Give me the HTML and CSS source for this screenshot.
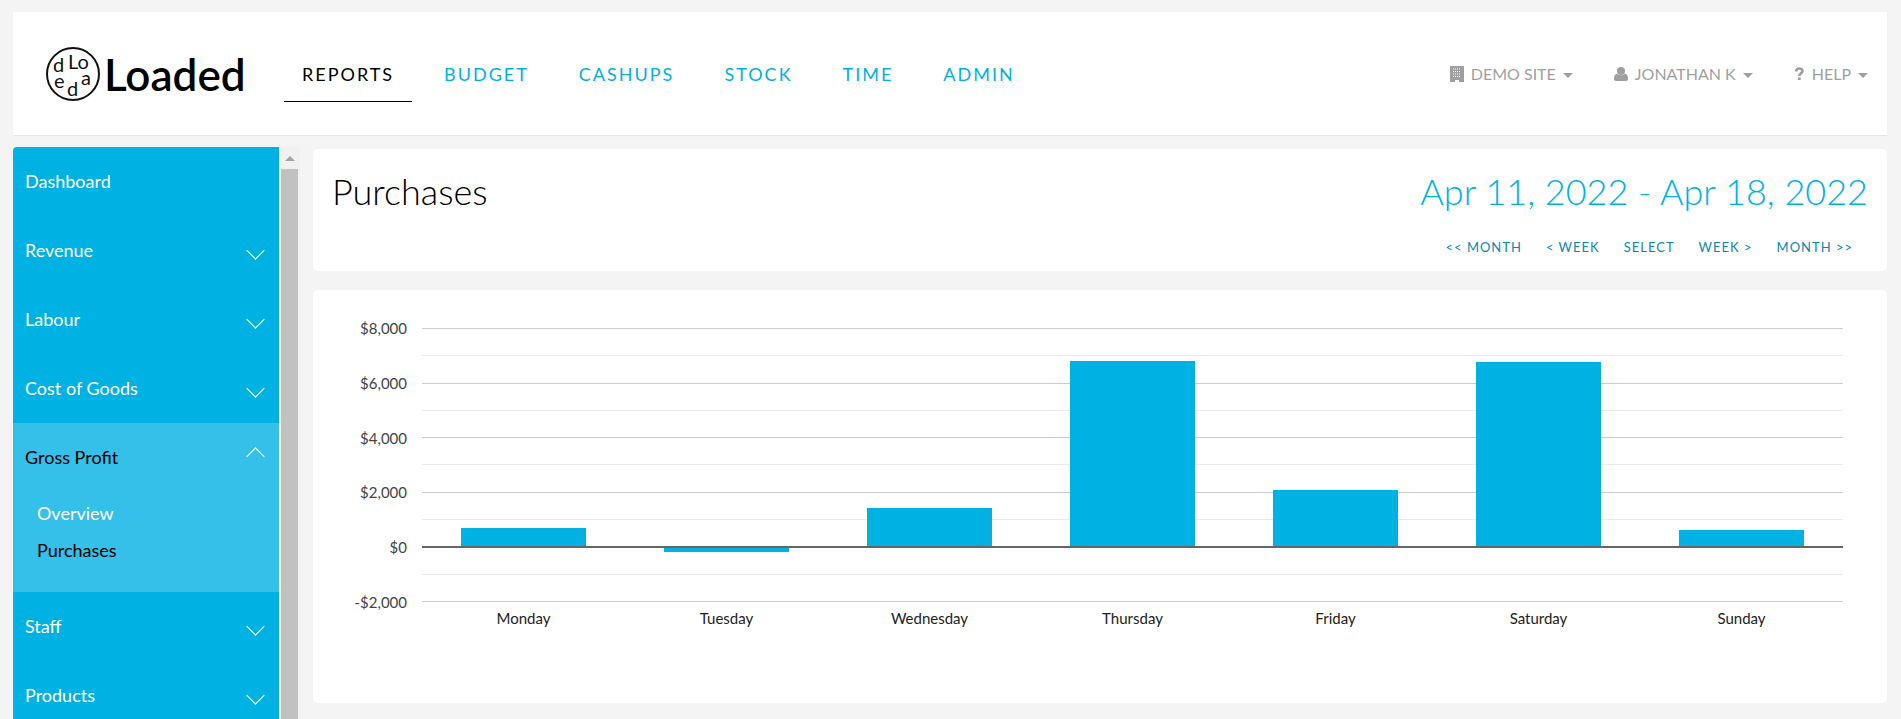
FILE: index.html
```html
<!DOCTYPE html>
<html lang="en">
<head>
    <meta charset="UTF-8">
    <meta name="viewport" content="width=device-width, initial-scale=1.0">
    <title>Purchases - Loaded Reports</title>
    <link rel="stylesheet" href="styles.css">
</head>
<body>
    <header class="topbar">
        <a class="brand" href="#">
            <svg class="brand-mark" width="56" height="56" viewBox="0 0 56 56">
                <circle cx="28" cy="28" r="26" fill="none" stroke="#111" stroke-width="2"/>
                <text x="8" y="26">d</text>
                <text x="23" y="23">Lo</text>
                <text x="36" y="39">a</text>
                <text x="22" y="50">d</text>
                <text x="9" y="42">e</text>
            </svg>
            <span class="brand-name">Loaded</span>
        </a>
        <nav class="main-nav">
            <a class="active" href="#">REPORTS</a>
            <a href="#">BUDGET</a>
            <a href="#">CASHUPS</a>
            <a href="#">STOCK</a>
            <a href="#">TIME</a>
            <a href="#">ADMIN</a>
        </nav>
        <div class="user-nav">
            <button type="button">
                <svg width="14" height="16" viewBox="0 0 14 16">
                    <path d="M0 0h14v16H9v-2H5v2H0z" fill="currentColor"/>
                    <path d="M3 3h8M3 5.500h8M3 8h8M3 10.500h8" stroke="#fff" stroke-width="1" stroke-dasharray="1 1"/>
                </svg>
                DEMO SITE
                <span class="caret"></span>
            </button>
            <button type="button">
                <svg width="14" height="16" viewBox="0 0 14 16">
                    <circle cx="7" cy="5" r="4" fill="currentColor"/>
                    <path d="M3 7.500C1 8 0 10 0 13c0 1.200.8 2 2 2h10c1.200 0 2-.8 2-2 0-3-1-5-3-5.500-2.200 2.200-5.800 2.200-8 0z" fill="currentColor"/>
                </svg>
                JONATHAN K
                <span class="caret"></span>
            </button>
            <button type="button">
                <svg width="11" height="14" viewBox="0 0 11 14">
                    <path d="M2 4.500C2.300 2.300 3.600 1.500 5.300 1.500c1.900 0 3.200 1 3.200 2.500 0 2.200-3.200 2.300-3.200 5" fill="none" stroke="currentColor" stroke-width="2.600"/>
                    <path d="M3.900 10.500h2.800V13H3.900z" fill="currentColor"/>
                </svg>
                HELP
                <span class="caret"></span>
            </button>
        </div>
    </header>

    <div class="layout">
        <aside class="sidebar">
            <ul class="menu">
                <li><a href="#">Dashboard</a></li>
                <li><a href="#">Revenue <i class="chevron"></i></a></li>
                <li><a href="#">Labour <i class="chevron"></i></a></li>
                <li><a href="#">Cost of Goods <i class="chevron"></i></a></li>
                <li class="open">
                    <a class="current" href="#">Gross Profit <i class="chevron"></i></a>
                    <ul class="submenu">
                        <li><a href="#">Overview</a></li>
                        <li><a class="current" href="#">Purchases</a></li>
                    </ul>
                </li>
                <li><a href="#">Staff <i class="chevron"></i></a></li>
                <li><a href="#">Products <i class="chevron"></i></a></li>
            </ul>
            <div class="scrollbar">
                <span class="scroll-up"></span>
                <span class="scroll-thumb"></span>
            </div>
        </aside>

        <main class="content">
            <section class="card page-head">
                <h1>Purchases</h1>
                <div class="period">
                    <h2>Apr 11, 2022 - Apr 18, 2022</h2>
                    <div class="period-nav">
                        <a href="#">&lt;&lt; MONTH</a>
                        <a href="#">&lt; WEEK</a>
                        <a href="#">SELECT</a>
                        <a href="#">WEEK &gt;</a>
                        <a href="#">MONTH &gt;&gt;</a>
                    </div>
                </div>
            </section>

            <section class="card chart">
                <div class="y-axis">
                    <span>$8,000</span>
                    <span>$6,000</span>
                    <span>$4,000</span>
                    <span>$2,000</span>
                    <span>$0</span>
                    <span>-$2,000</span>
                </div>
                <div class="plot-wrap">
                    <div class="plot">
                        <div class="grid">
                            <i></i><i></i><i></i><i></i><i></i><i></i><i></i><i></i><i></i><i></i>
                        </div>
                        <!-- bar heights are value / 10000 of the plot -->
                        <div class="bars">
                            <div class="bar" style="height: 7.1%"></div>
                            <div class="bar negative" style="height: 2%"></div>
                            <div class="bar" style="height: 14.4%"></div>
                            <div class="bar" style="height: 67.9%"></div>
                            <div class="bar" style="height: 20.8%"></div>
                            <div class="bar" style="height: 67.4%"></div>
                            <div class="bar" style="height: 6.2%"></div>
                        </div>
                        <div class="zero-line"></div>
                    </div>
                    <div class="x-axis">
                        <span>Monday</span>
                        <span>Tuesday</span>
                        <span>Wednesday</span>
                        <span>Thursday</span>
                        <span>Friday</span>
                        <span>Saturday</span>
                        <span>Sunday</span>
                    </div>
                </div>
            </section>
        </main>
    </div>
</body>
</html>
```

FILE: styles.css
```css
:root {
    --blue: #00b1e4;
    --blue-light: #34c0e8;
    --blue-dark: #0e87ad;
    --gray: #9f9f9f;
    --bg: #f4f4f4;
}
* {
    box-sizing: border-box;
}
body {
    margin: 0;
    padding: 12px 14px 0 13px;
    height: 100vh;
    overflow: hidden;
    display: flex;
    flex-direction: column;
    gap: 12px;
    background: var(--bg);
    font-family: Lato, 'Open Sans', sans-serif;
    font-weight: 400;
    color: #000;
}
a {
    color: inherit;
    text-decoration: none;
}
ul {
    list-style: none;
    margin: 0;
    padding: 0;
}

/* header */
.topbar {
    display: flex;
    align-items: center;
    height: 123px;
    padding: 0 19px 0 32px;
    background: #fff;
    box-shadow: 0 1px 1px rgba(0,0,0,0.05);
    flex-shrink: 0;
}
.brand {
    display: flex;
    align-items: center;
    gap: 3px;
    width: 239px;
}
.brand-mark {
    flex-shrink: 0;
}
.brand-mark text {
    font-size: 20px;
    fill: #111;
}
.brand-name {
    font-size: 44px;
    line-height: 56px;
    font-weight: 600;
}
.main-nav {
    display: flex;
    gap: 14px;
    margin-top: 4px;
}
.main-nav a {
    padding: 12px 18px 14px;
    border-bottom: 1px solid transparent;
    font-size: 18px;
    line-height: 26px;
    letter-spacing: 2px;
    color: var(--blue);
}
.main-nav a.active {
    color: #000;
    border-color: #000;
}
.user-nav {
    display: flex;
    gap: 41px;
    margin-left: auto;
}
.user-nav button {
    display: flex;
    align-items: center;
    gap: 7px;
    padding: 0;
    border: 0;
    background: none;
    font: inherit;
    font-size: 16px;
    color: var(--gray);
    cursor: pointer;
}
.caret {
    border: 5px solid transparent;
    border-top-color: currentColor;
    border-bottom: 0;
    margin-top: 3px;
}

.layout {
    display: flex;
    align-items: flex-start;
    gap: 13px;
    flex: 1;
    min-height: 0;
}

/* sidebar */
.sidebar {
    display: flex;
    width: 287px;
    height: 100%;
    flex-shrink: 0;
    overflow: hidden;
}
.menu {
    flex: 1;
    background: var(--blue);
    border-top-left-radius: 4px;
    color: #fff;
    font-size: 18px;
}
.menu > li > a {
    display: flex;
    align-items: center;
    justify-content: space-between;
    height: 69px;
    padding: 0 15px 2px 12px;
}
.menu .current {
    color: #000;
}
.menu .open {
    background: var(--blue-light);
    padding-bottom: 23px;
}
.submenu {
    padding: 3px 0 0 24px;
}
.submenu a {
    display: block;
    line-height: 37px;
}
.chevron {
    width: 13px;
    height: 13px;
    margin: 2px 2px 0 0;
    border: solid #fff;
    border-width: 0 1px 1px 0;
    transform: rotate(45deg);
}
.open .chevron {
    margin-top: 0;
    transform: rotate(225deg);
}
.scrollbar {
    display: flex;
    flex-direction: column;
    align-items: center;
    width: 21px;
    padding: 9px 2px 0;
    background: #f1f1f1;
}
.scroll-up {
    border: 5px solid transparent;
    border-bottom-color: #a3a3a3;
    border-top: 0;
}
.scroll-thumb {
    flex: 1;
    width: 17px;
    margin-top: 8px;
    background: #c1c1c1;
}

/* content */
.content {
    flex: 1;
    min-width: 0;
    display: flex;
    flex-direction: column;
    gap: 19px;
    padding-top: 2px;
}
.card {
    background: #fff;
    border-radius: 5px;
}
.page-head {
    display: flex;
    justify-content: space-between;
    padding: 18px 19px 8px;
}
.page-head h1,
.page-head h2 {
    margin: 0;
    font-size: 36px;
    line-height: 48px;
    font-weight: 300;
}
.page-head h2 {
    color: var(--blue);
}
.period-nav {
    display: flex;
    justify-content: flex-end;
    gap: 24px;
    padding: 16px 15px 0 0;
    font-size: 13px;
    line-height: 32px;
    letter-spacing: 1px;
    color: var(--blue-dark);
}

/* chart */
.chart {
    display: flex;
    gap: 15px;
    padding: 38px 44px 75px 36px;
    font-size: 15px;
}
.y-axis {
    display: flex;
    flex-direction: column;
    justify-content: space-between;
    width: 58px;
    height: 294px;
    margin-top: -10px;
    line-height: 20px;
    text-align: right;
    color: #444;
}
.plot-wrap {
    flex: 1;
    min-width: 0;
}
.plot {
    position: relative;
    height: 274px;
}
.grid {
    display: flex;
    flex-direction: column;
    height: 100%;
    border-bottom: 1px solid #ccc;
}
.grid i {
    flex: 1;
    border-top: 1px solid #ebebeb;
}
.grid i:nth-child(odd) {
    border-color: #ccc;
}
.bars {
    position: absolute;
    inset: 0;
    display: flex;
    justify-content: space-around;
    align-items: flex-end;
}
.bar {
    width: 8.8%;
    margin-bottom: 55px;
    background: var(--blue);
}
.bar.negative {
    align-self: flex-start;
    margin: 219px 0 0;
}
.zero-line {
    position: absolute;
    left: 0;
    right: 0;
    top: 80%;
    height: 2px;
    margin-top: -1px;
    background: #666;
}
.x-axis {
    display: flex;
    padding-top: 6px;
    line-height: 20px;
    color: #222;
}
.x-axis span {
    flex: 1;
    text-align: center;
}
```
